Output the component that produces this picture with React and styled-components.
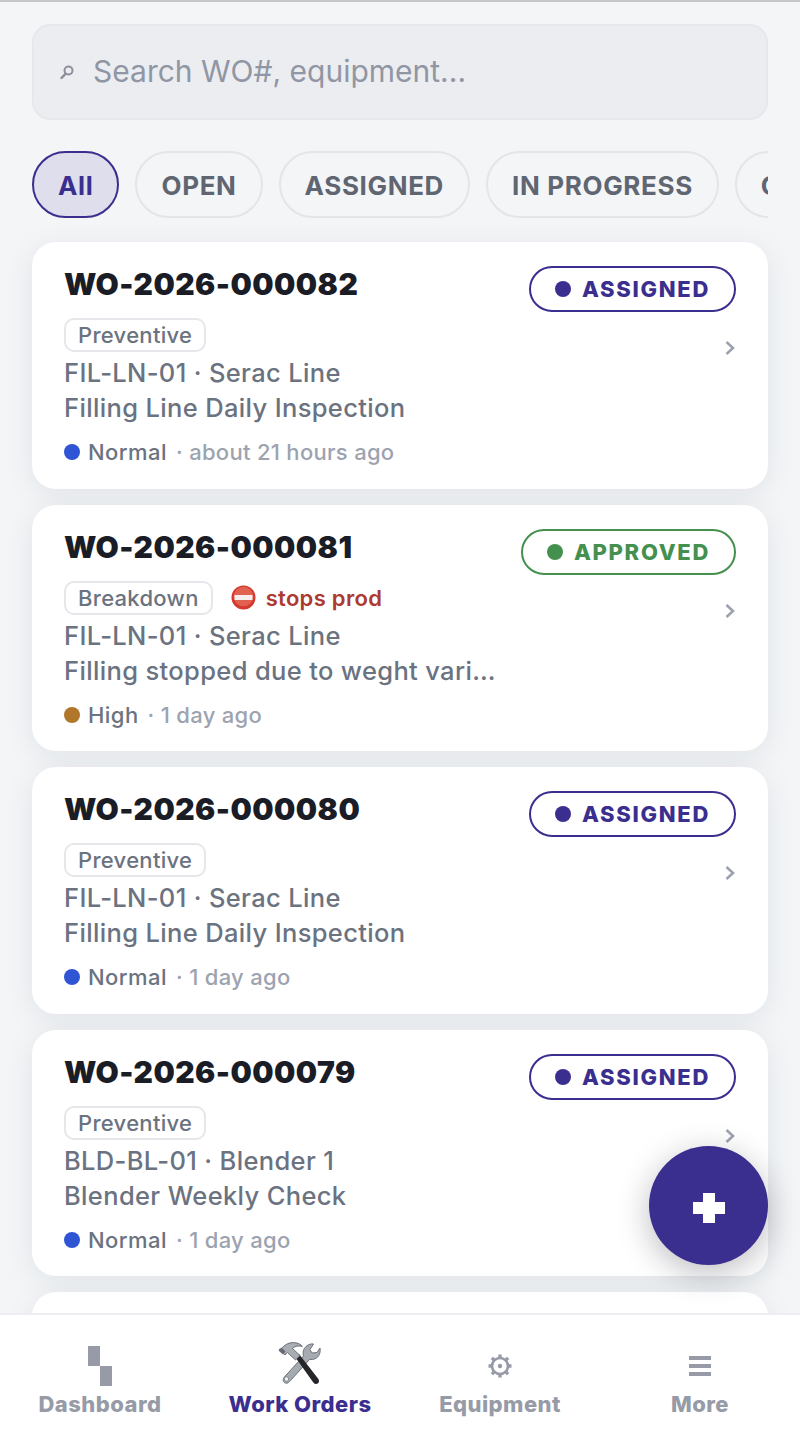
import styled, { createGlobalStyle } from "styled-components";

const PRIMARY = "#3a2e8f";
const NAV_GREY = "#969ba7";

const GlobalStyle = createGlobalStyle`
  html, body { margin: 0; padding: 0; background: #f3f5f7; }
  * { box-sizing: border-box; }
  body { font-family: Inter, "Liberation Sans", sans-serif; }
`;

const Page = styled.div`
  position: relative;
  width: 800px;
  height: 1455px;
  display: flex;
  flex-direction: column;
  overflow: hidden;
  background: #f3f5f7;
  border-top: 2px solid #c4c6c9;
`;

const Main = styled.main`
  flex: 1;
  min-height: 0;
  overflow: hidden;
  padding: 22px 32px 0;
  display: flex;
  flex-direction: column;
`;

const SearchBox = styled.div`
  height: 96px;
  flex: none;
  display: flex;
  align-items: center;
  gap: 19px;
  padding-left: 26px;
  background: #ecedf1;
  border: 2px solid #e6e8eb;
  border-radius: 18px;
  color: #9096a3;
  font-size: 30px;
  font-weight: 400;
`;

const SearchHint = styled.span`
  margin-top: -2px;
`;

const Chips = styled.div`
  flex: none;
  display: flex;
  gap: 16px;
  margin-top: 31px;
  overflow: hidden;
`;

const Chip = styled.div`
  flex: none;
  height: 67px;
  padding: 1px 24px 0;
  display: flex;
  align-items: center;
  border-radius: 34px;
  border: 2px solid ${(p) => (p.$active ? PRIMARY : "#e3e5e9")};
  background: ${(p) => (p.$active ? "#dfdeec" : "transparent")};
  color: ${(p) => (p.$active ? PRIMARY : "#5f6672")};
  font-size: 26px;
  font-weight: 700;
  letter-spacing: 0.65px;
`;

const List = styled.div`
  display: flex;
  flex-direction: column;
  gap: 16px;
  margin-top: 24px;
`;

const Card = styled.article`
  flex: none;
  height: 246.5px;
  padding: 24px 32px 0;
  background: #fff;
  border-radius: 24px;
  box-shadow: 0 6px 30px rgba(30, 35, 50, 0.08);
`;

const CardHead = styled.div`
  display: flex;
  justify-content: space-between;
  align-items: flex-start;
  height: 52px;
`;

const WoNumber = styled.div`
  font-size: 30px;
  line-height: 36px;
  font-weight: 900;
  color: #1a1c26;
  letter-spacing: 0.45px;
`;

const StatusBadge = styled.div`
  height: 46px;
  padding: 0 24px;
  display: flex;
  align-items: center;
  gap: 11px;
  border: 2px solid ${(p) => p.$color};
  border-radius: 23px;
  color: ${(p) => p.$color};
  font-size: 22px;
  font-weight: 800;
  letter-spacing: 1.7px;
`;

const Dot = styled.span`
  flex: none;
  width: 16px;
  height: 16px;
  border-radius: 50%;
  background: ${(p) => p.$color};
`;

const CardBody = styled.div`
  display: flex;
  justify-content: space-between;
  align-items: flex-start;
`;

const TagRow = styled.div`
  display: flex;
  align-items: center;
  gap: 18px;
  margin-bottom: 3px;
`;

const Tag = styled.span`
  height: 34px;
  padding: 0 12px;
  display: flex;
  align-items: center;
  border: 2px solid #e5e7eb;
  border-radius: 10px;
  font-size: 22px;
  font-weight: 500;
  color: #6b7280;
  letter-spacing: 0.3px;
`;

const StopsProd = styled.span`
  display: flex;
  align-items: center;
  gap: 10px;
  font-size: 22px;
  font-weight: 600;
  color: #ad3a30;
  letter-spacing: 0.3px;
`;

const InfoLine = styled.div`
  max-width: 432px;
  height: 35px;
  font-size: 25.5px;
  line-height: 35px;
  font-weight: 500;
  color: #6b7280;
  letter-spacing: 0.35px;
  white-space: nowrap;
  overflow: hidden;
  text-overflow: ellipsis;
`;

const Chevron = styled.svg`
  flex: none;
  width: 12px;
  height: 16px;
  margin-top: 22px;
  color: #9ca3af;
`;

const CardFoot = styled.div`
  display: flex;
  align-items: center;
  gap: 8px;
  margin-top: 14px;
  font-size: 22px;
  letter-spacing: 0.3px;
`;

const Priority = styled.span`
  font-weight: 500;
  letter-spacing: 0.45px;
  color: #6b7280;
`;

const Age = styled.span`
  margin-left: 1px;
  color: #9ca3af;
  font-weight: 500;
`;

const Fab = styled.button`
  position: absolute;
  right: 32px;
  bottom: 190px;
  width: 119px;
  height: 119px;
  padding: 5px 0 0;
  border: 0;
  border-radius: 50%;
  display: flex;
  align-items: center;
  justify-content: center;
  background: ${PRIMARY};
  box-shadow: 0 8px 32px rgba(20, 20, 40, 0.28);
`;

const BottomNav = styled.nav`
  flex: none;
  position: relative;
  height: 142px;
  display: grid;
  grid-template-columns: repeat(4, 1fr);
  padding-top: 27px;
  background: #fff;
  border-top: 2px solid #eceef1;
`;

const NavItem = styled.div`
  display: flex;
  flex-direction: column;
  align-items: center;
  color: ${(p) => (p.$active ? PRIMARY : NAV_GREY)};
`;

const NavIcon = styled.div`
  height: 48px;
  display: flex;
  align-items: center;
  justify-content: center;
`;

const NavLabel = styled.div`
  margin-top: 1px;
  font-size: 22px;
  line-height: 26px;
  font-weight: 800;
  letter-spacing: 0.45px;
`;

const ToolsSvg = styled.svg`
  margin: -5px 2px 0 0;
`;

const SearchIcon = () => (
  <svg width="14" height="15" viewBox="0 0 14 15" fill="none" stroke="#8b8f9a" strokeWidth="2">
    <circle cx="8.5" cy="5.5" r="4" />
    <path d="M5.5 8.8 1.5 13" strokeLinecap="round" strokeWidth="2.4" />
  </svg>
);

const NoEntry = () => (
  <svg width="25" height="25" viewBox="0 0 25 25">
    <circle cx="12.5" cy="12.5" r="12" fill="#d4382e" />
    <circle cx="12.5" cy="11.5" r="9.8" fill="#e2604f" />
    <rect x="3.5" y="10" width="18" height="5" rx="0.6" fill="#f4efee" />
  </svg>
);

const DashboardIcon = () => (
  <svg width="24" height="40" viewBox="0 0 24 40" fill="currentColor">
    <rect x="0" y="0" width="12" height="20" />
    <rect x="12" y="20" width="12" height="20" />
  </svg>
);

const ToolsIcon = () => (
  <ToolsSvg width="44" height="45" viewBox="0 0 44 45">
    <path d="M36.500 3 33 8.500l2 3.500 5-.5 3-4.500c.8 4.500-.7 8.800-5 10.800-2 .9-3.700.9-5.200.4L13.500 39.500c-1.500 2-3.500 3.600-5.700 2.300-2.200-1.400-2-3.800-.5-5.700L26.500 15c-1-3.500-.3-7 2.500-9.500 2.200-2 4.800-3 7.500-2.500z" fill="#a6abb2" stroke="#63686f" strokeWidth="0.9" />
    <circle cx="9.500" cy="38" r="2.200" fill="#eef0f2" stroke="#63686f" strokeWidth="0.6" />
    <path d="M18.500 16.500 22 13l19 24.500c1.500 2 1.300 3.600 0 4.800-1.400 1.200-3.200.9-4.700-.8z" fill="#26262a" />
    <path d="M5 7C9 2 16 0 22.500 3c1.400.7 2.300 1.500 2.800 2.500C21.500 4.300 18 5 15.500 7.500l7.500 7-4.500 4.500-8-7.500-2.500 2.500L2 8.500z" fill="#a9adb4" stroke="#63686f" strokeWidth="0.9" />
    <path d="M1.500 9.500 5 7l3.500 3.500-2.500 3z" fill="#666b72" />
  </ToolsSvg>
);

const GearIcon = () => (
  <svg width="24" height="24" viewBox="0 0 24 24" fill="none" stroke="currentColor">
    <circle cx="12" cy="12" r="8" strokeWidth="2.600" />
    <circle cx="12" cy="12" r="2.200" fill="currentColor" stroke="none" />
    <g strokeWidth="3.400">
      <path d="M12 0.500v3.500M12 20v3.500M0.500 12H4M20 12h3.500" />
      <path d="M3.900 3.900l2.500 2.500M17.600 17.600l2.500 2.500M3.900 20.100l2.500-2.500M17.600 6.400l2.500-2.500" />
    </g>
  </svg>
);

const MenuIcon = () => (
  <svg width="22" height="20" viewBox="0 0 22 20" fill="currentColor">
    <rect y="0" width="22" height="4" />
    <rect y="8" width="22" height="4" />
    <rect y="16" width="22" height="4" />
  </svg>
);

const STATUS = {
  ASSIGNED: PRIMARY,
  APPROVED: "#44904f",
};

const PRIORITY = {
  Normal: "#2f55d4",
  High: "#b0762a",
};

const orders = [
  { no: "WO-2026-000082", status: "ASSIGNED", type: "Preventive", asset: "FIL-LN-01 · Serac Line", title: "Filling Line Daily Inspection", priority: "Normal", age: "about 21 hours ago" },
  { no: "WO-2026-000081", status: "APPROVED", type: "Breakdown", stops: true, asset: "FIL-LN-01 · Serac Line", title: "Filling stopped due to weght variation", priority: "High", age: "1 day ago" },
  { no: "WO-2026-000080", status: "ASSIGNED", type: "Preventive", asset: "FIL-LN-01 · Serac Line", title: "Filling Line Daily Inspection", priority: "Normal", age: "1 day ago" },
  { no: "WO-2026-000079", status: "ASSIGNED", type: "Preventive", asset: "BLD-BL-01 · Blender 1", title: "Blender Weekly Check", priority: "Normal", age: "1 day ago" },
];

const filters = ["All", "OPEN", "ASSIGNED", "IN PROGRESS", "COMPLETED"];

export default function App() {
  return (
    <Page>
      <GlobalStyle />
      <Main>
        <SearchBox>
          <SearchIcon />
          <SearchHint>Search WO#, equipment...</SearchHint>
        </SearchBox>
        <Chips>
          {filters.map((f, i) => (
            <Chip key={f} $active={i === 0}>{f}</Chip>
          ))}
        </Chips>
        <List>
          {orders.map((o) => (
            <Card key={o.no}>
              <CardHead>
                <WoNumber>{o.no}</WoNumber>
                <StatusBadge $color={STATUS[o.status]}>
                  <Dot $color={STATUS[o.status]} />
                  {o.status}
                </StatusBadge>
              </CardHead>
              <CardBody>
                <div>
                  <TagRow>
                    <Tag>{o.type}</Tag>
                    {o.stops && (
                      <StopsProd>
                        <NoEntry />
                        stops prod
                      </StopsProd>
                    )}
                  </TagRow>
                  <InfoLine>{o.asset}</InfoLine>
                  <InfoLine>{o.title}</InfoLine>
                </div>
                <Chevron viewBox="0 0 12 16" fill="none" stroke="currentColor" strokeWidth="2.600">
                  <path d="M2.500 2 9 8l-6.500 6" />
                </Chevron>
              </CardBody>
              <CardFoot>
                <Dot $color={PRIORITY[o.priority]} />
                <Priority>{o.priority}</Priority>
                <Age>· {o.age}</Age>
              </CardFoot>
            </Card>
          ))}
          <Card />
        </List>
      </Main>
      <Fab aria-label="New work order">
        <svg width="32" height="30" viewBox="0 0 32 30" fill="#fff">
          <rect x="10" y="0" width="12" height="30" />
          <rect x="0" y="9" width="32" height="12" />
        </svg>
      </Fab>
      <BottomNav>
        <NavItem>
          <NavIcon><DashboardIcon /></NavIcon>
          <NavLabel>Dashboard</NavLabel>
        </NavItem>
        <NavItem $active>
          <NavIcon><ToolsIcon /></NavIcon>
          <NavLabel>Work Orders</NavLabel>
        </NavItem>
        <NavItem>
          <NavIcon><GearIcon /></NavIcon>
          <NavLabel>Equipment</NavLabel>
        </NavItem>
        <NavItem>
          <NavIcon><MenuIcon /></NavIcon>
          <NavLabel>More</NavLabel>
        </NavItem>
      </BottomNav>
    </Page>
  );
}
